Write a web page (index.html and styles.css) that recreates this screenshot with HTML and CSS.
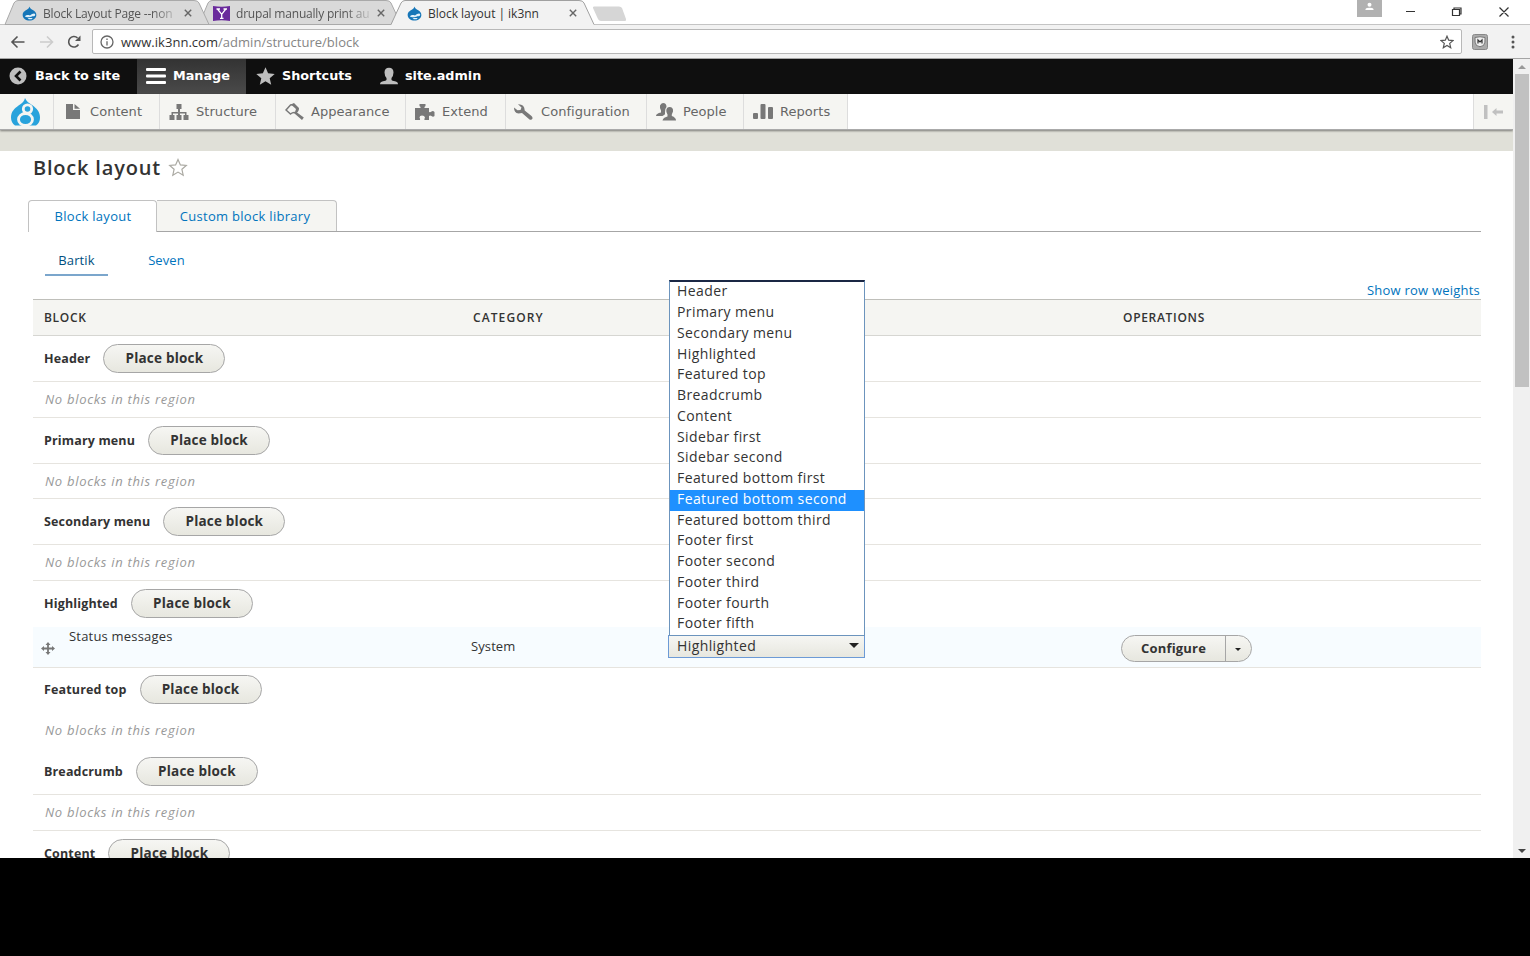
FILE: index.html
```html
<!DOCTYPE html>
<html lang="en">
<head>
  <meta charset="UTF-8">
  <title>Block layout | ik3nn</title>
  <link rel="stylesheet" href="styles.css">
</head>
<body>

  <!-- shared icons -->
  <svg class="defs" width="0" height="0">
    <symbol id="drop" viewBox="0 0 16 16">
      <path fill="#1676b8" d="M8 .5C8.500 2.500 10 3.300 12 4.500C14.200 6 15.500 7.500 15.300 9.800C15 13.200 12 15.500 8 15.500C4 15.500 .8 13.200 .7 9.500C.6 6 4.500 4.600 6.200 3.300C7.300 2.400 7.700 1.500 8 .5Z"/>
      <path fill="#dff0fa" d="M3 11C4.500 9.500 6.500 9.500 8.500 10C10.500 8.500 13 7 14 8.500C14.500 10.500 13 11 11 11C9 12 5 12.800 3 11ZM6 13.300C8 12.800 10 12.800 11.500 13.300C10 14.500 7.500 14.500 6 13.300Z"/>
    </symbol>
    <symbol id="close" viewBox="0 0 8 8">
      <path d="M.8 .8L7.200 7.200M7.200 .8L.8 7.200" fill="none" stroke="#666" stroke-width="1.400"/>
    </symbol>
  </svg>

  <div class="tab-strip">
    <svg class="tab-shapes" width="1530" height="25">
      <path d="M0 24.500H1530" stroke="#c4c4c4"/>
      <path d="M199 24.500L208 3Q209.500 .5 212 .5H386Q390 .5 391 3L401 24.500Z" fill="#d9d9d9" stroke="#a9a9a9"/>
      <path d="M5 24.500L14 3Q15.500 .5 18 .5H194Q198 .5 199 3L209 24.500Z" fill="#d9d9d9" stroke="#a9a9a9"/>
      <path d="M391 25L401 3Q402.500 .5 405 .5H579Q583 .5 584 3L594 24.500V26H391Z" fill="#f2f2f2"/>
      <path d="M391 24.500L401 3Q402.500 .5 405 .5H579Q583 .5 584 3L594 24.500" fill="none" stroke="#a0a0a0"/>
      <path d="M593 8Q592.500 6.500 594 6.500H619Q621 6.500 622 8L626 19Q626.500 21 625 21H601Q599 21 598 19Z" fill="#d6d6d6"/>
    </svg>
    <div class="tab tab-one">
      <svg width="15" height="15"><use href="#drop"/></svg>
      <span class="tab-title fade">Block Layout Page --non</span>
      <svg class="x" width="8" height="8"><use href="#close"/></svg>
    </div>
    <div class="tab tab-two">
      <svg width="17" height="15"><path d="M0 0Q8.500 1.500 17 0V15Q8.500 13.500 0 15Z" fill="#6a2a9c"/><path d="M4.500 3L8.700 8.300L12.800 3M8.700 8V12.500M3.500 3H7M10.500 3H14M7 12.300H10.500" fill="none" stroke="#fff" stroke-width="1.300"/></svg>
      <span class="tab-title fade">drupal manually print au</span>
      <svg class="x" width="8" height="8"><use href="#close"/></svg>
    </div>
    <div class="tab tab-three">
      <svg width="15" height="15"><use href="#drop"/></svg>
      <span class="tab-title">Block layout | ik3nn</span>
      <svg class="x" width="8" height="8"><use href="#close"/></svg>
    </div>
    <div class="window-buttons">
      <svg width="173" height="25" fill="none" stroke="#333" stroke-width="1.200">
        <path d="M0 0H25V17H0Z" fill="#b1b1b1" stroke="none"/>
        <circle cx="12.500" cy="4.800" r="2" fill="#fff" stroke="none"/>
        <path d="M8.500 10V9Q9 7.700 12.500 7.700T16.500 9V10Z" fill="#fff" stroke="none"/>
        <path d="M49 11.500H58M95.500 9.500H102.500V15.500H95.500ZM97 9V8H104V14H103M142.500 7.500L151.500 16.500M151.500 7.500L142.500 16.500"/>
      </svg>
    </div>
  </div>

  <div class="address-bar">
    <svg class="nav-icons" width="92" height="33" fill="none" stroke="#555" stroke-width="1.600">
      <path d="M24.500 17H12.500M17.500 11.500L12 17L17.500 22.500"/>
      <path stroke="#ccc" d="M40 17H52M47 11.500L52.500 17L47 22.500"/>
      <path d="M78.500 19.500A5.300 5.300 0 1 1 77.500 12.800"/>
      <path d="M80.500 10.500V16H75Z" fill="#555" stroke="none"/>
    </svg>
    <div class="url-box">
      <svg width="14" height="14" fill="none" stroke="#666" stroke-width="1.300"><circle cx="7" cy="7" r="6"/><path d="M7 6.300V10.500M7 3.500V5"/></svg>
      <span class="url">www.ik3nn.com<i>/admin/structure/block</i></span>
      <svg class="bookmark" width="14" height="14" viewBox="0 0 14 14"><path d="M7 1.200L8.700 5.200L13 5.600L9.700 8.400L10.700 12.700L7 10.400L3.300 12.700L4.300 8.400L1 5.600L5.300 5.200Z" fill="none" stroke="#555" stroke-width="1.200"/></svg>
    </div>
    <svg class="extension" width="16" height="16"><rect x=".5" y=".5" width="15" height="15" rx="2" fill="#aaa" stroke="#888"/><path d="M3 3.500Q8 2 13 3.500Q13.500 9 11.500 11.500Q8 14 4.500 11.500Q2.500 9 3 3.500Z" fill="#eee" stroke="#777"/><path d="M6 9.500V6L8 8L10 6V9.500" fill="none" stroke="#333" stroke-width="1.200"/></svg>
    <svg class="menu-dots" width="4" height="14" fill="#555"><circle cx="2" cy="2" r="1.500"/><circle cx="2" cy="7" r="1.500"/><circle cx="2" cy="12" r="1.500"/></svg>
  </div>

  <div class="viewport">
    <div class="page">

      <nav class="toolbar-bar">
        <a class="bar-item back">
          <svg width="18" height="18"><circle cx="9" cy="9" r="8.500" fill="#bebebe"/><path d="M11.500 4.500L7 9L11.500 13.500" fill="none" stroke="#0f0f0f" stroke-width="2.600"/></svg>
          Back to site
        </a>
        <a class="bar-item manage">
          <svg width="20" height="18" fill="#fff"><rect y="1" width="20" height="3" rx="1"/><rect y="7.500" width="20" height="3" rx="1"/><rect y="14" width="20" height="3" rx="1"/></svg>
          Manage
        </a>
        <a class="bar-item shortcuts">
          <svg width="19" height="18"><path d="M9.500 .3L12.100 6.300L18.700 6.900L13.700 11.200L15.200 17.700L9.500 14.300L3.800 17.700L5.300 11.200L.3 6.900L6.900 6.300Z" fill="#bebebe"/></svg>
          Shortcuts
        </a>
        <a class="bar-item user">
          <svg width="18" height="18" fill="#bebebe"><path d="M9 .8Q13.500 .8 13.500 5.500Q13.300 9.500 11.500 11V13Q12 14 15 14.300Q18 15 18 17.200H0Q0 15 3 14.300Q6 14 6.500 13V11Q4.700 9.500 4.500 5.500Q4.500 .8 9 .8Z"/></svg>
          site.admin
        </a>
      </nav>

      <nav class="toolbar-tray">
        <a class="tray-item logo">
          <svg width="32" height="32" viewBox="0 0 32 32">
            <path d="M15 1C16 4 19 6 22 8C27 11.500 30 15 30 20.500Q30 26 26 28.500H5Q1 25.500 1 20.500C1 14.500 4.500 11.500 8.500 8.500C12.500 6 14.500 4 15 1Z" fill="#29a3dc"/>
            <g fill="none" stroke="#f5f5f2" stroke-width="2.800">
              <circle cx="17.500" cy="12" r="4.200"/>
              <ellipse cx="15.500" cy="22.500" rx="7" ry="6"/>
            </g>
          </svg>
        </a>
        <a class="tray-item content">
          <svg width="14" height="15" fill="#787878"><path d="M0 0H7V6H14V15H0ZM8.500 0L14 4.700H8.500Z"/></svg>
          Content
        </a>
        <a class="tray-item structure">
          <svg width="20" height="16" fill="#787878"><path d="M7.500 0H12.500V5H11V8H17.500V11H19.500V16H14.500V11H16V9.500H11V11H12.500V16H7.500V11H9V9.500H4V11H5.500V16H.5V11H2.500V8H9V5H7.500Z"/></svg>
          Structure
        </a>
        <a class="tray-item appearance">
          <svg width="19" height="17"><path d="M5.500 2L1 7L5.500 11Q8.500 8.500 11 10L13 6L8.500 1.500Z" fill="none" stroke="#787878" stroke-width="1.500"/><path d="M6 1.500L9 0L14 5Q14 8 12 9.500L18.800 14.500L17 17L9.500 10.500L11 6Z" fill="#787878"/></svg>
          Appearance
        </a>
        <a class="tray-item extend">
          <svg width="20" height="16" fill="#787878"><path d="M0 4H5.500Q6 3 4.500 2V0H10.500V2Q9 3 9.500 4H14V8Q15.500 8.500 16.500 7.500Q18 6.500 19.500 8V12Q18 13.500 16.500 12Q15 11 14 12V16H9.500Q9 15 10 13.500Q9.500 11.500 7 11.500T4.500 13.500Q5.500 15 5 16H0Z"/></svg>
          Extend
        </a>
        <a class="tray-item configuration">
          <svg width="19" height="16" fill="#787878"><path d="M4 .3L7.500 3.500L6.500 6L3.500 6.300L0 3.500Q0 9 4.500 9.500L8 9L15.500 15.500Q17.500 16.500 18.500 14.500Q18.700 13 17.500 12L10.700 6.500Q10.500 0 4 .3Z"/></svg>
          Configuration
        </a>
        <a class="tray-item people">
          <svg width="20" height="18" fill="#787878"><path d="M7 0Q10.500 0 10.500 4Q8.500 6 9 9.500Q9.500 11.500 8 12L6.500 13H0Q0 10.500 5 9.500V7.500Q3.500 5 4 2.500Q5 0 7 0Z"/><path d="M13.500 4Q17.500 4 17 8.500L15.800 11.500V13Q20 14.500 20 17.500H6.500Q7 14.500 11.500 13.500V11.500Q10 9.500 10.300 7Q10.800 4 13.500 4Z"/></svg>
          People
        </a>
        <a class="tray-item reports">
          <svg width="20" height="15" fill="#787878"><rect y="9" width="5" height="6" rx="1"/><rect x="7.500" width="5" height="15" rx="1"/><rect x="15" y="3" width="5" height="12" rx="1"/></svg>
          Reports
        </a>
        <a class="tray-toggle">
          <svg width="20" height="14" fill="#c0c0c0"><rect x="0" width="3.500" height="14"/><path d="M8 7L12.500 3V5.500H19V8.500H12.500V11Z"/></svg>
        </a>
      </nav>

      <header class="heading">
        <h1>Block layout</h1>
        <svg width="20" height="19" viewBox="0 0 20 19"><path d="M10 1.500L12.400 6.900L18.300 7.400L13.900 11.300L15.200 17.200L10 14.100L4.800 17.200L6.100 11.300L1.700 7.400L7.600 6.900Z" fill="none" stroke="#aaa9a2" stroke-width="1.200"/></svg>
      </header>

      <div class="tabs-primary">
        <a class="primary active">Block layout</a>
        <a class="primary library">Custom block library</a>
      </div>
      <div class="tabs-secondary">
        <a class="active">Bartik</a>
        <a>Seven</a>
      </div>
      <a class="weights">Show row weights</a>

      <main class="block-table">
        <div class="row head">
          <span>BLOCK</span><span class="head-category">CATEGORY</span><span></span><span class="head-ops">OPERATIONS</span>
        </div>
        <div class="row region"><b>Header</b><button>Place block</button></div>
        <div class="row empty">No blocks in this region</div>
        <div class="row region"><b>Primary menu</b><button>Place block</button></div>
        <div class="row empty">No blocks in this region</div>
        <div class="row region"><b>Secondary menu</b><button>Place block</button></div>
        <div class="row empty">No blocks in this region</div>
        <div class="row region no-line"><b>Highlighted</b><button>Place block</button></div>
        <div class="row block">
          <div class="block-name">
            <svg width="14" height="13" viewBox="0 0 14 13" fill="#777"><path d="M7 0L9.500 3H7.900V5.600H11V4L14 6.500L11 9V7.400H7.900V10H9.500L7 13L4.500 10H6.100V7.400H3V9L0 6.500L3 4V5.600H6.100V3H4.500Z"/></svg>
            <span>Status messages</span>
          </div>
          <span class="category">System</span>
          <div class="select">
            <span>Highlighted</span>
            <i class="arrow"></i>
            <ul class="options">
              <li>Header</li>
              <li>Primary menu</li>
              <li>Secondary menu</li>
              <li>Highlighted</li>
              <li>Featured top</li>
              <li>Breadcrumb</li>
              <li>Content</li>
              <li>Sidebar first</li>
              <li>Sidebar second</li>
              <li>Featured bottom first</li>
              <li class="hover">Featured bottom second</li>
              <li>Featured bottom third</li>
              <li>Footer first</li>
              <li>Footer second</li>
              <li>Footer third</li>
              <li>Footer fourth</li>
              <li>Footer fifth</li>
            </ul>
          </div>
          <div class="dropbutton">
            <span class="configure">Configure</span>
            <span class="toggle"><i class="arrow"></i></span>
          </div>
        </div>
        <div class="row region no-line"><b>Featured top</b><button>Place block</button></div>
        <div class="row empty no-line">No blocks in this region</div>
        <div class="row region"><b>Breadcrumb</b><button>Place block</button></div>
        <div class="row empty">No blocks in this region</div>
        <div class="row region"><b>Content</b><button>Place block</button></div>
      </main>
    </div>

    <div class="scrollbar">
      <i class="up"></i>
      <div class="thumb"></div>
      <i class="down"></i>
    </div>
  </div>

</body>
</html>
```
FILE: styles.css
```css
* {
  box-sizing: border-box;
}

body {
  margin: 0;
  height: 956px;
  overflow: hidden;
  background: #000;
  color: #333;
  font-family: "Open Sans", "Noto Sans", sans-serif;
  font-size: 13px;
}

svg {
  flex: none;
  display: block;
}

a {
  color: inherit;
}

.defs {
  position: absolute;
}

/* browser window */
.tab-strip {
  position: relative;
  display: flex;
  height: 25px;
  background: #fff;
}

.tab-shapes {
  position: absolute;
  left: 0;
  top: 0;
}

.tab {
  position: relative;
  display: flex;
  align-items: center;
  height: 26px;
  padding-left: 22px;
  color: #555;
  font-size: 12px;
  white-space: nowrap;
}

.tab-one { width: 192px; }
.tab-two { width: 193px; padding-left: 21px; }
.tab-three { width: 192px; color: #333; }

.tab-title {
  flex: 1;
  margin-left: 6px;
  letter-spacing: -0.03px;
}

.tab-one .tab-title,
.tab-two .tab-title {
  letter-spacing: -0.2px;
}

.fade {
  -webkit-mask-image: linear-gradient(to right, #000 82%, rgba(0, 0, 0, 0.2));
  mask-image: linear-gradient(to right, #000 82%, rgba(0, 0, 0, 0.2));
}

.tab .x {
  margin-left: 8px;
}

.window-buttons {
  position: relative;
  margin-left: auto;
}

.address-bar {
  display: flex;
  align-items: center;
  height: 34px;
  background: #f2f2f2;
  border-bottom: 1px solid #a5a5a5;
}

.url-box {
  display: flex;
  align-items: center;
  width: 1370px;
  height: 25px;
  padding: 0 7px;
  background: #fff;
  border: 1px solid #b8b8b8;
  border-radius: 2px;
}

.url {
  flex: 1;
  margin-left: 7px;
  color: #333;
  font-size: 13px;
  letter-spacing: 0.03px;
}

.url i {
  color: #858585;
  font-style: normal;
}

.extension {
  margin-left: 10px;
}

.menu-dots {
  margin-left: 23px;
}

.viewport {
  display: flex;
  height: 799px;
  overflow: hidden;
  background: #fff;
}

.page {
  width: 1513px;
  overflow: hidden;
}

.scrollbar {
  display: flex;
  flex-direction: column;
  align-items: center;
  width: 17px;
  background: #f0f0f0;
}

.scrollbar .thumb {
  width: 14px;
  height: 313px;
  margin-top: 5px;
  background: #c1c1c1;
}

.up,
.down {
  border: 4px solid transparent;
}

.up {
  margin-top: 2px;
  border-bottom-color: #999;
}

.down {
  margin: auto 0 1px;
  border-top-color: #444;
}

/* admin toolbar */
.toolbar-bar {
  display: flex;
  height: 35px;
  background: #0f0f0f;
  color: #fff;
  font: bold 12.8px "DejaVu Sans", sans-serif;
}

.bar-item {
  display: flex;
  align-items: center;
  gap: 8px;
  height: 35px;
  padding-bottom: 2px;
  white-space: nowrap;
}

.back { width: 137px; padding-left: 9px; }
.manage { width: 109px; padding-left: 9px; gap: 7px; background: linear-gradient(#333, #4a4a4a); }
.shortcuts { width: 132px; padding-left: 10px; gap: 7px; }
.user { padding-left: 2px; gap: 7px; }

.toolbar-tray {
  position: relative;
  display: flex;
  height: 36px;
  background: #fff;
  border-bottom: 1px solid #aaa;
  box-shadow: 0 1px 2px rgba(0, 0, 0, 0.45);
  color: #666;
  font: 13px "DejaVu Sans", sans-serif;
}

.tray-item {
  display: flex;
  align-items: center;
  background: #f5f5f2;
  border-right: 1px solid #ddd;
  letter-spacing: 0.05px;
  white-space: nowrap;
}

.logo { width: 54px; padding-left: 10px; padding-top: 2px; }
.content { width: 106px; gap: 10px; padding-left: 12px; }
.structure { width: 116px; gap: 7px; padding-left: 9px; }
.appearance { width: 130px; gap: 7px; padding-left: 9px; }
.extend { width: 100px; gap: 7px; padding-left: 9px; }
.configuration { width: 141px; gap: 8px; padding-left: 8px; }
.people { width: 97px; gap: 7px; padding-left: 9px; }
.reports { width: 104px; gap: 7px; padding-left: 9px; }

.tray-toggle {
  display: flex;
  align-items: center;
  width: 40px;
  margin-left: auto;
  padding-left: 10px;
  background: #f5f5f2;
  border-left: 1px solid #ddd;
}

/* page header and tabs */
.heading {
  display: flex;
  align-items: center;
  height: 55px;
  margin-bottom: 15px;
  padding: 0 0 2px 33px;
  border-top: 21px solid #e0e0d8;
}

h1 {
  margin: 0 7px 0 0;
  font-size: 20px;
  font-weight: 600;
  letter-spacing: 0.8px;
}

.tabs-primary {
  display: flex;
  width: 1453px;
  height: 32px;
  margin-left: 28px;
  border-bottom: 1px solid #a6a6a6;
}

.primary {
  height: 31px;
  line-height: 30px;
  text-align: center;
  border: 1px solid #c2c2c2;
  border-bottom: 0;
  color: #0074bd;
  letter-spacing: 0.3px;
}

.primary.active {
  width: 129px;
  height: 32px;
  padding-left: 1px;
  background: #fff;
  border-radius: 4px 4px 0 0;
}

.primary.library {
  width: 180px;
  padding-right: 3px;
  background: #f5f5f2;
  border-left: 0;
  border-radius: 0 4px 0 0;
}

.tabs-secondary {
  display: flex;
  gap: 27px;
  height: 50px;
  padding: 13px 0 0 45px;
  color: #0074bd;
  letter-spacing: 0.1px;
}

.tabs-secondary a {
  width: 63px;
  height: 31px;
  line-height: 31px;
  text-align: center;
}

.tabs-secondary .active {
  color: #004f80;
  border-bottom: 2px solid #7ba6cc;
}

.weights {
  display: block;
  width: 1480px;
  height: 17px;
  line-height: 17px;
  text-align: right;
  color: #0074bd;
  letter-spacing: 0.22px;
}

/* block listing */
.block-table {
  width: 1448px;
  margin-left: 33px;
}

.row {
  display: flex;
  align-items: center;
  border-bottom: 1px solid #e6e4df;
}

.row.no-line {
  border-bottom-color: transparent;
}

.head {
  display: grid;
  grid-template-columns: 429px 204px 446px 1fr;
  height: 37px;
  padding-left: 11px;
  background: #f5f5f2;
  border-top: 1px solid #bfbfba;
  border-bottom-color: #d6d6d2;
  font-size: 12px;
  font-weight: 600;
  letter-spacing: 0.7px;
}

.head-category {
  letter-spacing: 1.1px;
}

.region {
  height: 45.95px;
  padding-left: 11px;
}

.region b {
  margin-right: 13px;
  font-size: 12.5px;
  font-weight: 700;
  letter-spacing: 0.15px;
}

.empty {
  height: 35.75px;
  padding-left: 12px;
  padding-bottom: 1px;
  color: #999;
  font-style: italic;
  letter-spacing: 0.7px;
}

button {
  width: 122px;
  height: 29px;
  padding: 0 0 1px;
  border: 1px solid #a6a6a6;
  border-radius: 15px;
  background: linear-gradient(#f6f6f3, #e7e7df);
  color: #333;
  font: 700 13.5px "Open Sans", sans-serif;
  letter-spacing: 0.2px;
}

.block {
  height: 40.5px;
  background: #f7fcff;
}

.block-name {
  display: flex;
  gap: 14px;
  width: 438px;
  padding-left: 8px;
}

.block-name svg {
  margin-top: 3px;
}

.block-name span {
  margin-top: -14px;
  line-height: 22px;
  letter-spacing: 0.2px;
}

.category {
  width: 197px;
  padding-bottom: 1px;
  letter-spacing: 0.1px;
}

.select {
  position: relative;
  display: flex;
  align-items: center;
  justify-content: space-between;
  width: 197px;
  height: 23px;
  padding: 0 5px 2px 8px;
  border: 1px solid #6c9ad6;
  background: linear-gradient(#f6f6f3, #e7e7df);
  font-size: 14px;
  letter-spacing: 0.4px;
}

.arrow {
  border: 5px solid transparent;
  border-top-color: #222;
  border-bottom: 0;
}

.options {
  position: absolute;
  left: 0;
  bottom: 21px;
  width: 196px;
  margin: 0;
  padding: 0;
  background: #fff;
  border: 1px solid #6c94bd;
  border-top: 2px solid #1a2744;
  list-style: none;
}

.options li {
  height: 20.78px;
  padding-left: 7px;
  line-height: 18px;
}

.options .hover {
  background: #1e90ff;
  color: #fff;
}

.dropbutton {
  display: flex;
  width: 131px;
  height: 27px;
  margin: 3px 0 0 256px;
  border: 1px solid #a6a6a6;
  border-radius: 14px;
  background: linear-gradient(#f6f6f3, #e7e7df);
  font-weight: 700;
  letter-spacing: 0.2px;
}

.configure {
  width: 104px;
  line-height: 24px;
  text-align: center;
  border-right: 1px solid #a6a6a6;
}

.toggle {
  flex: 1;
  display: flex;
  align-items: center;
  padding-left: 9px;
}

.toggle .arrow {
  border-width: 3px 3.5px 0;
  margin-top: 3px;
}
```
